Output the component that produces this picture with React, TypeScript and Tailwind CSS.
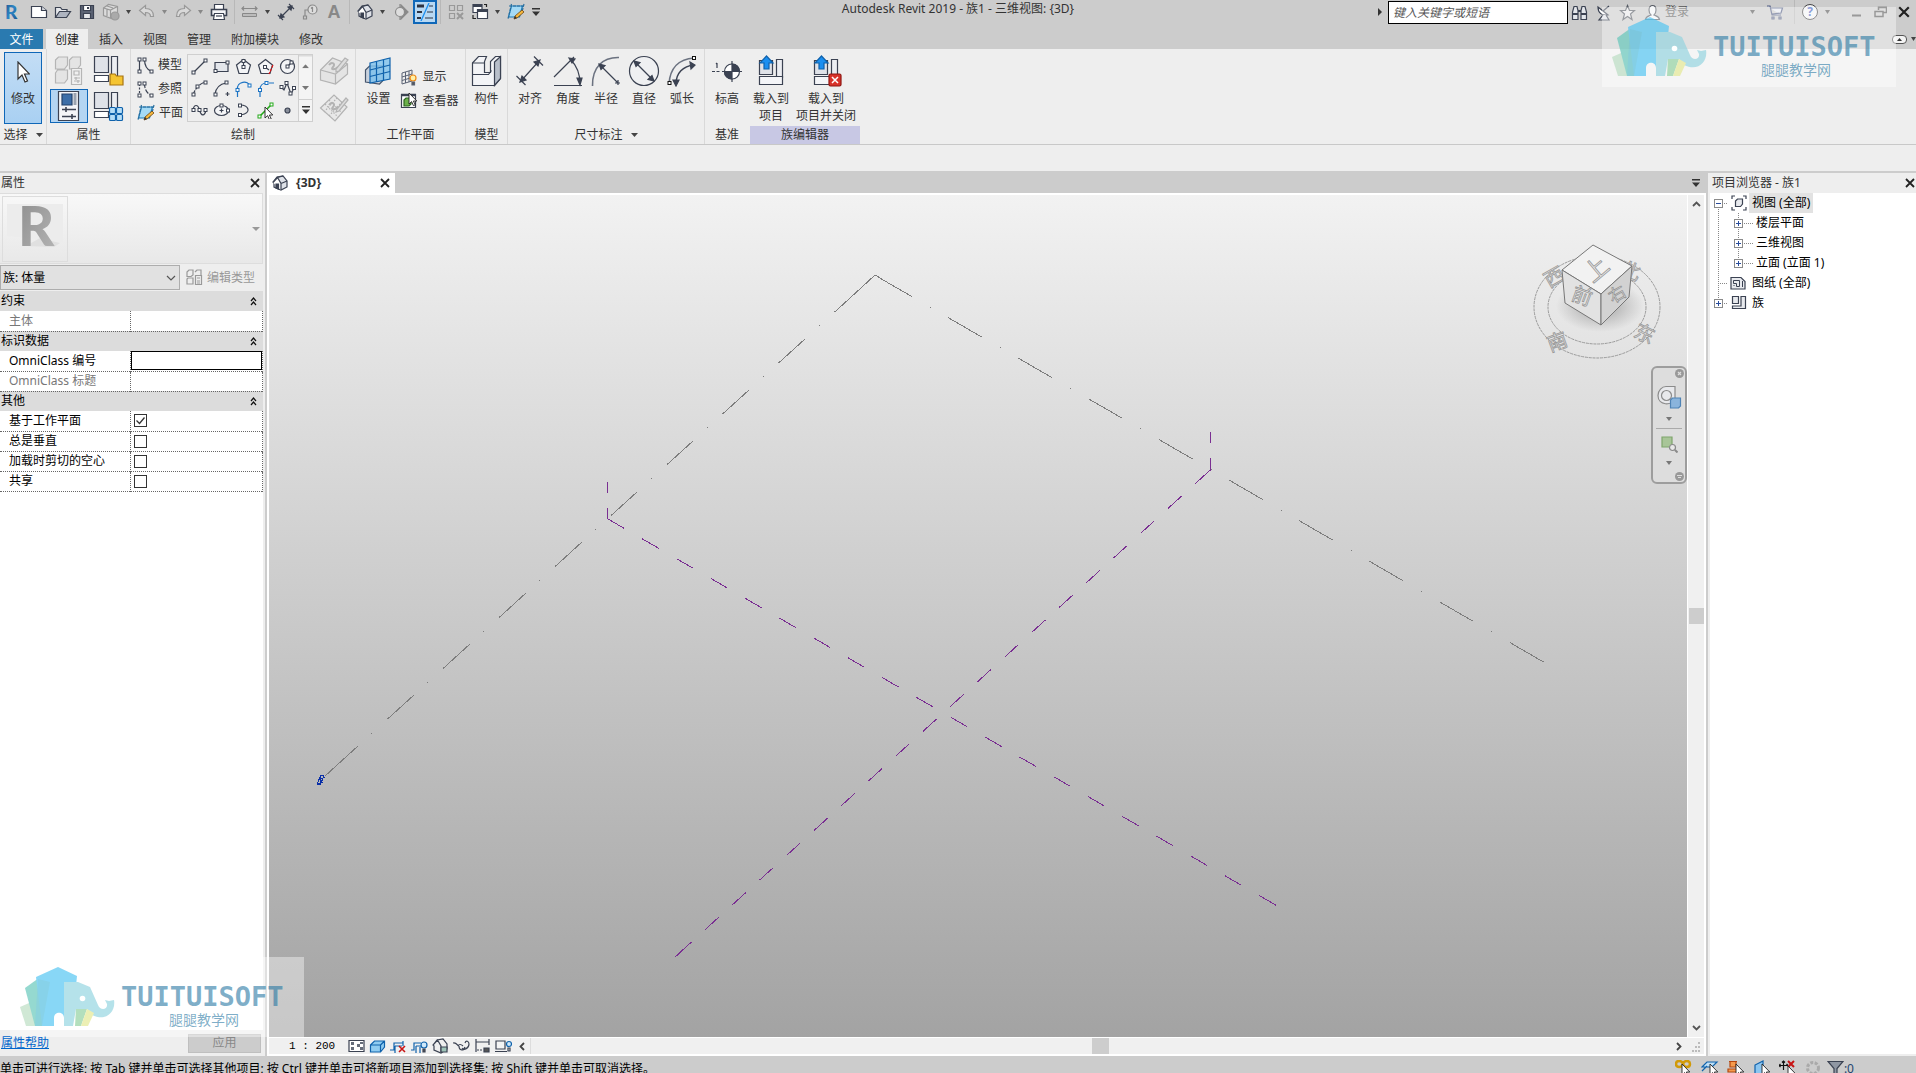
import type { ReactNode } from "react";
import clsx from "clsx";

const INK = "#3b4252";
const BLUE = "#0f62ac";

type SvgProps = { w: number; h: number; children: ReactNode; stroke?: string; className?: string };

function Svg({ w, h, children, stroke = INK, className }: SvgProps) {
  return (
    <svg
      width={w}
      height={h}
      viewBox={`0 0 ${w} ${h}`}
      fill="none"
      stroke={stroke}
      strokeWidth="1.2"
      className={clsx("shrink-0", className)}
      aria-hidden="true"
    >
      {children}
    </svg>
  );
}

/* ---------- shared drawings ---------- */

const Caret = ({ color = "#444", w = 7 }: { color?: string; w?: number }) => (
  <Svg w={w} h={4} stroke="none">
    <path d={`M0 0h${w}L${w / 2} 4z`} fill={color} />
  </Svg>
);

const MenuCaret = () => (
  <Svg w={8} h={8} stroke="none">
    <path d="M0 0h8v1.500H0zM0 3.500h8L4 8z" fill="#333" />
  </Svg>
);

const CloseIcon = ({ size = 10 }: { size?: number }) => (
  <svg width={size} height={size} viewBox="0 0 10 10" stroke="#222" strokeWidth="1.8" aria-hidden="true">
    <path d="M1 1l8 8M9 1L1 9" />
  </svg>
);

const Cursor = ({ x, y }: { x: number; y: number }) => (
  <path d={`M${x} ${y}v11l2.600-2.400 1.800 4 1.800-.8-1.800-3.800h3.400z`} fill="#fff" stroke="#222" strokeWidth=".9" />
);

const Node = ({ x, y, color = INK }: { x: number; y: number; color?: string }) => (
  <rect x={x - 1.5} y={y - 1.5} width="3" height="3" fill="#fff" stroke={color} strokeWidth="1" />
);

const HouseIcon = () => (
  <Svg w={16} h={16}>
    <path d="M1 7l4-5 6-1 4 5v6l-6 3-7-3V8z" fill="#dfe2e8" />
    <path d="M1 7.500l4.500-5L9 8.500V15M9 8.500l6-2.500M5.500 2.500L11 1" fill="#fff" />
    <path d="M4 9h2.500v5L4 13z" fill={INK} />
  </Svg>
);

const PlaneIcon = () => (
  <Svg w={18} h={18}>
    <path d="M4.500 3h11l-3 11h-11z" fill="#a5daf5" stroke="#1c7ab8" />
    <path d="M2 3h14M4.500 1L1 16M17 1l-2 8" stroke="#2a6f9e" strokeDasharray="3 1" />
    <path d="M7 16l1-3 7-6 2 2-7 6z" fill="#f6b73c" stroke="#6b4412" strokeWidth=".8" />
    <path d="M7 16l1-3 2 2z" fill="#333" stroke="none" />
  </Svg>
);

/* ---------- quick access icons ---------- */

const Logo = () => (
  <svg width="20" height="24" viewBox="0 0 20 24" className="overflow-visible" aria-hidden="true">
    <defs>
      <linearGradient id="logo" x1="0" y1="0" x2="1" y2="1">
        <stop offset="0" stopColor="#1c4f86" />
        <stop offset=".5" stopColor="#2f86c6" />
        <stop offset="1" stopColor="#174a80" />
      </linearGradient>
    </defs>
    <text x="3" y="19" fontSize="19" fontWeight="900" fontFamily="Lato, sans-serif" fill="url(#logo)">R</text>
  </svg>
);

const NewIcon = () => (
  <Svg w={18} h={16}>
    <path d="M1.500 2.500h10l5 4v7h-15z" fill="#fff" />
    <path d="M11.500 2.500v4h5" fill="#d5d8de" />
  </Svg>
);

const OpenIcon = () => (
  <Svg w={18} h={16}>
    <path d="M1.500 13V3.500h5l1.500 2h5v2" fill="#e6e8ec" />
    <path d="M1.500 13.500l4-6h11l-4 6z" fill="#aeb4c0" />
  </Svg>
);

const SaveIcon = () => (
  <Svg w={16} h={16}>
    <path d="M1.500 1.500h13v13h-13z" fill="#5b6374" />
    <path d="M4.500 1.500h7v5h-7z" fill="#fff" />
    <path d="M4.500 9.500h7v5h-7z" fill="#e6e8ec" />
    <path d="M9 3v2" strokeWidth="2" />
  </Svg>
);

const SyncIcon = () => (
  <Svg w={18} h={18} stroke="#999">
    <path d="M1.500 5l5-3.500 9 2v8l-6 4-8-3z" fill="#dcdcdc" />
    <path d="M1.500 5l7 2 7-3.500M8.500 7v8M5 6v7M5 3l6 2" />
    <circle cx="13" cy="13" r="4" fill="#aaa" />
  </Svg>
);

const UndoIcon = ({ flip = false }: { flip?: boolean }) => (
  <Svg w={18} h={16} stroke="#999">
    <path
      d={flip ? "M16.500 6.500l-6-5v3c-5 0-8 2-8 8h3c0-3 2-4 5-4v3z" : "M1.500 6.500l6-5v3c5 0 8 2 8 8h-3c0-3-2-4-5-4v3z"}
      fill="#d9d9d9"
    />
  </Svg>
);

const PrintIcon = () => (
  <Svg w={18} h={18}>
    <path d="M4.500 7V1.500h9V7" fill="#fff" />
    <path d="M1.500 6.500h15v6h-15z" fill="#f4f5f7" strokeWidth="1.600" />
    <path d="M4.500 10.500h9l1 6h-11z" fill="#fff" />
    <path d="M6 13h6" />
  </Svg>
);

const MeasureIcon = () => (
  <Svg w={18} h={14} stroke="#888">
    <path d="M1 3.500h15M3 1.500l-2 2 2 2M14 1.500l2 2-2 2" />
    <path d="M1.500 8.500h14v3h-14z" fill="#bbb" strokeWidth="1" />
  </Svg>
);

const DimIcon = () => (
  <Svg w={18} h={18}>
    <path d="M3 15L15 3M1 12l5 5M12 1l5 5" />
    <path d="M3 15l1-4 3 3zM15 3l-4 1 3 3z" fill={INK} />
  </Svg>
);

const TagIcon = () => (
  <Svg w={16} h={16} stroke="#8a8a8a">
    <circle cx="10.500" cy="5.500" r="4.500" fill="#ddd" />
    <path d="M10.500 3v5M9 4.500L10.500 3M6 6H3v6M1.500 12h3v3h-3z" />
  </Svg>
);

const SectionIcon = () => (
  <Svg w={16} h={16} stroke="#8a8a8a">
    <path d="M8 1l7 7-7 7z" fill="#8a8a8a" />
    <circle cx="7" cy="8" r="4.500" fill="#ddd" />
    <path d="M7 0v3M7 13v3" />
  </Svg>
);

const ThinLinesIcon = () => (
  <Svg w={18} h={18} stroke="#2d3342">
    <path d="M1 3h7" strokeWidth="3" />
    <path d="M1 9h5" strokeWidth="2" />
    <path d="M1 15h4" strokeWidth="2" />
    <path d="M13 3h4M11 9h6M9 15h8" strokeWidth="1" />
    <path d="M13 0L5 18" stroke="#1b8ff0" strokeWidth="1.300" />
  </Svg>
);

const CloseHiddenIcon = () => (
  <Svg w={16} h={16} stroke="#999">
    <path d="M1.500 1.500h5v5h-5zM9.500 1.500h5v5h-5zM1.500 9.500h5v5h-5z" />
    <path d="M9 9l6 6M15 9l-6 6" strokeWidth="2" />
  </Svg>
);

const SwitchIcon = () => (
  <Svg w={18} h={18}>
    <path d="M2 1.500h9v8H2z" fill="#fff" />
    <path d="M6.500 6.500h10v9h-10z" fill="#fff" />
    <path d="M2 3h9M6.500 8h10" strokeWidth="2" />
    <path d="M13 1.500h2.500V4M5 15.500H2V12" stroke="#222" />
  </Svg>
);

/* ---------- ribbon icons ---------- */

const TypePropsIcon = () => (
  <Svg w={30} h={30} stroke="#b5b5b5">
    <path d="M1.500 4l3-3h9v8l-3 4h-9zM15.500 4l3-3h8v8l-3 4h-8zM1.500 17l2-3h10v9l-3 4h-9z" fill="#e4e4e4" />
    <path d="M17.500 12.500h10v16h-10z" fill="#f0f0f0" />
    <path d="M20 15h5v4h-5zM20 22h6M20 25h6M22 21v3M24 24v3" />
  </Svg>
);

const PropsIcon = () => (
  <Svg w={24} h={32}>
    <path d="M1.500 1.500h20v29h-20z" fill="#f4f5f8" />
    <path d="M5 4h10v11H5z" fill="#3c6ea8" stroke="#23436c" />
    <path d="M18 3v12" stroke="#9aa3b0" strokeWidth="3" />
    <path d="M5 19.500h14M9 17v5M5 26.500h14M15 24v5" strokeWidth="1.600" />
  </Svg>
);

const FamilyIcon = ({ kind }: { kind: "folder" | "types" }) => (
  <Svg w={31} h={31}>
    <path d="M1.500 1.500h14v16h-14z" fill="#dfe2e8" />
    <path d="M18.500 1.500h6v20h-6z" fill="#eceef2" />
    <path d="M1.500 20.500h14v6h-14z" fill="#fff" />
    {kind === "folder" ? (
      <path d="M17 19h5l1.500 2H30v9H17z" fill="#f5c431" stroke="#a87412" />
    ) : (
      <g fill="#b5ddf7" stroke={BLUE}>
        <rect x="16.500" y="16.500" width="6" height="6" rx="1" />
        <rect x="23.500" y="16.500" width="6" height="6" rx="1" />
        <rect x="16.500" y="23.500" width="6" height="6" rx="1" />
        <rect x="23.500" y="23.500" width="6" height="6" rx="1" />
      </g>
    )}
  </Svg>
);

const ModelLineIcon = ({ dashed = false }: { dashed?: boolean }) => (
  <Svg w={17} h={17}>
    <path d="M2.500 3v11" strokeDasharray={dashed ? "2 1.5" : undefined} />
    <path d="M7.500 2c0 7 3 11 7 12.500" strokeDasharray={dashed ? "5 1.5" : undefined} />
    <Node x={2.5} y={2.5} />
    <Node x={2.5} y={14.5} />
    <Node x={7.5} y={2.5} />
    <Node x={14.5} y={14.5} />
  </Svg>
);

const drawTools: { name: string; icon: ReactNode }[] = [
  { name: "线", icon: <><path d="M2 15L15 2" /><Node x={2.5} y={14.5} /><Node x={14.5} y={2.5} /></> },
  { name: "矩形", icon: <><path d="M2 4.500h13v9H2z" fill="#e3e6eb" /><Node x={2.5} y={13} /><Node x={14.5} y={4.5} /></> },
  { name: "内接多边形", icon: <><path d="M8.500 1.500l7 5.500-2.500 8.500H4L1.500 7z" fill="#f4f5f7" /><path d="M8.500 2v6" /><Node x={8.5} y={9} /><Node x={8.5} y={3} /></> },
  { name: "外接多边形", icon: <><path d="M8.500 1.500l7 5.500-2.500 8.500H4L1.500 7z" fill="#f4f5f7" /><path d="M8 9l4 3" /><path d="M16 7l-4 9" stroke="#e01818" strokeDasharray="3 1" /><Node x={8} y={9} /></> },
  { name: "圆形", icon: <><circle cx="8.500" cy="8.500" r="7" fill="#f4f5f7" /><path d="M8.500 8.500l4-4" /><Node x={8.5} y={8.5} /><Node x={12.5} y={4.5} /></> },
  { name: "起点-终点-半径弧", icon: <><path d="M2 15C4 9 8 4 14 2" strokeDasharray="5 1" /><Node x={2.5} y={14.5} /><Node x={6.5} y={6.5} /><Node x={14.5} y={2.5} /></> },
  { name: "圆心-端点弧", icon: <><path d="M2 14C3 8 7 4 13 3" /><path d="M12.500 14h4M14.500 12v4" /><Node x={2.5} y={14.5} /><Node x={13.5} y={2.5} /></> },
  { name: "相切-端点弧", icon: <g stroke="#1d74c4"><path d="M2.500 10C1 1 14 0 14.500 6M2.500 12v5" /><Node x={2.5} y={10} color="#1d74c4" /><Node x={14.5} y={5.5} color="#1d74c4" /></g> },
  { name: "圆角弧", icon: <g stroke="#1d74c4"><path d="M3 10c0-5 2-7 7-7M3 12v5M12 3h5" /><Node x={3} y={10} color="#1d74c4" /><Node x={9.5} y={3} color="#1d74c4" /></g> },
  { name: "样条曲线", icon: <><path d="M2 7l3 3 3-7 4 11 3-6" /><Node x={2.5} y={7} /><Node x={7.5} y={3} /><Node x={11.5} y={13.5} /><Node x={15} y={8} /></> },
  { name: "通过点的样条曲线", icon: <><path d="M2 8c1-6 5-6 6.500 0s5 7 6.500 0" /><Node x={2.5} y={8} /><Node x={8.5} y={8} /><Node x={14.5} y={8} /></> },
  { name: "椭圆", icon: <><ellipse cx="8.500" cy="8.500" rx="7" ry="5" fill="#f4f5f7" /><path d="M8.500 6.500v4M6.500 8.500h4" /><Node x={8.5} y={3.5} /><Node x={15} y={8.5} /></> },
  { name: "半椭圆", icon: <><path d="M5 3c9 0 12 8 1 10" /><Node x={5} y={3.5} /><Node x={5} y={13} /></> },
  { name: "拾取线", icon: <><path d="M2 15L15 2" stroke="#23a818" strokeWidth="1.600" /><Node x={2.5} y={14.5} color="#23a818" /><Node x={14.5} y={2.5} color="#23a818" /><Cursor x={8} y={5} /></> },
  { name: "点图元", icon: <circle cx="8.500" cy="8.500" r="2.500" fill="#888e9a" /> },
];

const DrawOnFaceIcon = () => (
  <Svg w={30} h={30} stroke="#b3b3b3">
    <path d="M1.500 14l12-12 15 6v10l-12 10-15-4z" fill="#e4e4e4" />
    <path d="M1.500 14l15 4 12-10M16.500 18v10" />
    <path d="M10 9c3-4 7-1 4 2s2 3 5 0" strokeWidth="2" />
    <path d="M17 13l9-11 3 2-9 11-3 1z" fill="#ddd" />
  </Svg>
);

const DrawOnPlaneIcon = () => (
  <Svg w={30} h={30} stroke="#b3b3b3">
    <path d="M1.500 15L15 2l13 12-12 14z" fill="#e8e8e8" />
    <path d="M6 11l13 13M10 7l13 13M5 19L18 5M10 23L23 9" strokeDasharray="1.500 1.500" />
    <path d="M10 12c3-4 7-1 4 2s2 3 5 0" strokeWidth="2" />
    <path d="M18 16l9-11 2 2-9 11-3 1z" fill="#ddd" />
  </Svg>
);

const WorkPlaneIcon = () => (
  <Svg w={28} h={30} stroke={BLUE}>
    <path d="M1.500 14l4-4h14v14l-4 4-14-2z" fill="#c9d2dd" stroke="#46566d" />
    <path d="M6 7l20-5v21L6 27z" fill="#7cc0ec" fillOpacity=".8" />
    <path d="M12.500 5.500V26M19.500 4v20.500M6 14l20-5M6 20.500l20-5" />
  </Svg>
);

const ShowPlaneIcon = () => (
  <Svg w={18} h={18} stroke="#5b6374">
    <path d="M2 5l10-3v11L2 16zM5.500 4v11M9 3v11M2 9l10-3M2 12.500l10-3" strokeWidth="1" />
    <circle cx="13" cy="10" r="3" fill="#fff0a8" stroke="#ee8a16" />
    <path d="M12 14h2.500v3H12z" fill="#555" />
  </Svg>
);

const ViewerIcon = () => (
  <Svg w={18} h={18}>
    <path d="M1.500 2.500h14v13h-14z" fill="#fff" />
    <path d="M1 3h15" strokeWidth="2.500" />
    <path d="M4 8l2-2h5v6l-2 2H4z" fill="#6bb04b" stroke="#2d6620" />
    <Cursor x={9} y={1} />
  </Svg>
);

const ComponentIcon = () => (
  <Svg w={31} h={32}>
    <path d="M1.500 8l6-6.500h8l-2 5v11h6V6.500l5-5h5v22l-6 7h-22z" fill="#f3f4f7" />
    <path d="M23.500 7v23M23.500 7l6-5.500v22l-6 7z" fill="#b8bfca" />
    <path d="M1.500 8h12M1.500 19.500h16l3-4" />
  </Svg>
);

const AlignedIcon = () => (
  <Svg w={30} h={32}>
    <path d="M6 26L24 6M1.500 21l9 9M19 1.500l9 9" />
    <path d="M5 27l2-6 4 4zM25 5l-6 2 4 4z" fill={INK} />
  </Svg>
);

const AngularIcon = () => (
  <Svg w={30} h={32}>
    <path d="M1 30.500h28M1 22L21 2M18 5c6 6 9 14 9 24" />
    <path d="M16 3l6 1-3 4zM24 23h5l-2 7z" fill={INK} />
  </Svg>
);

const RadialIcon = () => (
  <Svg w={30} h={32}>
    <path d="M1.500 31C1 12 12 2 28 2.500" stroke="#6b7280" strokeWidth="1.600" />
    <path d="M9 10l18 18M24 28h5M27 25v5" />
    <path d="M8 9l6 1.500-4 4z" fill={INK} />
  </Svg>
);

const DiameterIcon = () => (
  <Svg w={32} h={32}>
    <circle cx="16" cy="16" r="14.500" fill="#eff0f2" />
    <path d="M7 7l18 18" />
    <path d="M6 6l6 1.500-4 4zM26 26l-6-1.500 4-4z" fill={INK} />
  </Svg>
);

const ArcLengthIcon = () => (
  <Svg w={30} h={32}>
    <path d="M2 29C3 13 12 4 27 3" stroke="#6b7280" strokeWidth="1.600" />
    <path d="M9 29c0-11 7-18 18-19" strokeWidth="1.500" />
    <path d="M6 25h6l-3 6zM23 7l5 3-4 4z" fill={INK} />
    <Node x={27} y={3} color="#111" />
    <Node x={2.5} y={28} color="#111" />
  </Svg>
);

const LevelIcon = () => (
  <Svg w={30} h={32}>
    <path d="M0 16.500h9" strokeDasharray="3 1.500" />
    <path d="M10 16.500h20M20 6v21M5 8v5M4 9l1-1" />
    <circle cx="20" cy="16.500" r="7.500" fill="#fff" />
    <path d="M20 9a7.500 7.500 0 0 1 7.500 7.500H20zM20 24a7.500 7.500 0 0 1-7.500-7.500H20z" fill="#3b4252" />
  </Svg>
);

const LoadIcon = ({ close = false }: { close?: boolean }) => (
  <Svg w={32} h={32}>
    <path d="M4.500 5.500h13v14h-13z" fill="#dfe2e8" />
    <path d="M21.500 4.500h6v18h-6z" fill="#eceef2" />
    <path d="M4.500 21.500h23v8h-23z" fill="#f4f5f8" />
    <path d="M11.500 1l6.500 7h-4v6H9V8H5z" fill="#1b8ff0" stroke={BLUE} />
    {close && (
      <>
        <rect x="19" y="19" width="12" height="12" rx="1.500" fill="#d8322a" stroke="#8f1712" />
        <path d="M22 22l6 6M28 22l-6 6" stroke="#fff" strokeWidth="1.500" />
      </>
    )}
  </Svg>
);

/* ---------- top bar ---------- */

function QatButton({ label, active, children }: { label: string; active?: boolean; children: ReactNode }) {
  return (
    <button
      title={label}
      className={clsx(
        "flex h-6 w-6 shrink-0 items-center justify-center",
        active && "border-2 border-[#0f67b8] bg-[#b7d8f3]",
      )}
    >
      {children}
    </button>
  );
}

const QatCaret = ({ color }: { color?: string }) => (
  <button title="更多" className="mr-0.5 flex h-6 w-2.5 shrink-0 items-center justify-center">
    <Caret color={color} w={5} />
  </button>
);

const QatDivider = () => <span className="mx-[3px] h-6 w-px shrink-0 bg-[#b8b8b8]" />;

function QuickAccess() {
  return (
    <div className="flex h-6 items-center">
      <button title="Revit" className="mr-1 flex h-6 w-[23px] items-center justify-center">
        <Logo />
      </button>
      <QatButton label="新建"><NewIcon /></QatButton>
      <QatButton label="打开"><OpenIcon /></QatButton>
      <QatButton label="保存"><SaveIcon /></QatButton>
      <QatButton label="同步"><SyncIcon /></QatButton>
      <QatCaret />
      <QatButton label="放弃"><UndoIcon /></QatButton>
      <QatCaret color="#888" />
      <QatButton label="重做"><UndoIcon flip /></QatButton>
      <QatCaret color="#888" />
      <QatButton label="打印"><PrintIcon /></QatButton>
      <QatDivider />
      <QatButton label="测量"><MeasureIcon /></QatButton>
      <QatCaret />
      <QatButton label="对齐尺寸标注"><DimIcon /></QatButton>
      <QatButton label="按类别标记"><TagIcon /></QatButton>
      <QatButton label="文字">
        <span className="font-['Liberation_Sans'] text-lg/6 font-bold text-[#888]">A</span>
      </QatButton>
      <QatDivider />
      <QatButton label="默认三维视图"><HouseIcon /></QatButton>
      <QatCaret />
      <QatButton label="剖面"><SectionIcon /></QatButton>
      <QatButton label="细线" active><ThinLinesIcon /></QatButton>
      <QatDivider />
      <QatButton label="关闭隐藏窗口"><CloseHiddenIcon /></QatButton>
      <QatButton label="切换窗口"><SwitchIcon /></QatButton>
      <QatCaret />
      <QatButton label="工作平面"><PlaneIcon /></QatButton>
      <button title="自定义快速访问工具栏" className="flex h-6 w-4 items-center justify-center">
        <MenuCaret />
      </button>
    </div>
  );
}

function InfoCenter() {
  return (
    <div className="flex h-6 items-center justify-end">
      <button title="展开" className="mr-1 flex h-6 w-2 items-center justify-center">
        <Svg w={4} h={8} stroke="none"><path d="M0 0l4 4-4 4z" fill="#333" /></Svg>
      </button>
      <input
        aria-label="搜索"
        placeholder="键入关键字或短语"
        className="h-[23px] w-[180px] border border-black bg-white px-1 text-xs italic outline-none placeholder:text-[#555]"
      />
      <QatButton label="搜索">
        <Svg w={17} h={17}>
          <path d="M3 2.500h3l1 4v9H1.500V8zM11 2.500h3L15.500 8v7.500H10v-9z" fill="#e3e6eb" />
          <path d="M7 7h3M2 10h5M10 10h5" strokeWidth="2" />
        </Svg>
      </QatButton>
      <QatButton label="通讯中心">
        <Svg w={16} h={17}>
          <path d="M2 3c0 6 4 9 10 8z" fill="#fff" />
          <path d="M7 7l6-5M7 11l-4 5h10l-3-5" fill="#dfe2e8" />
        </Svg>
      </QatButton>
      <QatButton label="收藏夹">
        <Svg w={17} h={17} stroke="#555a63"><path d="M8.500 1.500l2 5h5l-4 3.500 1.500 5.500-4.500-3-4.500 3L5.500 10l-4-3.500h5z" fill="#e8e8ea" /></Svg>
      </QatButton>
      <button className="mr-14 ml-1 flex h-6 items-center gap-1 text-xs text-[#555]">
        <Svg w={17} h={17} stroke="#555a63"><path d="M5 6c0-6 7-6 7 0 0 3-1 4-2 5 2 1 5 1 5.500 4.500h-14C2 12 5 12 7 11 6 10 5 9 5 6z" fill="#f4f5f7" /></Svg>
        登录
      </button>
      <span className="w-0.5" />
      <QatCaret color="#555" />
      <span className="w-1" />
      <QatButton label="Autodesk App Store">
        <Svg w={18} h={17} stroke="#4f5a80">
          <path d="M1 2h3l2 9h9M4.500 4h12l-1.500 5-9 1" fill="#e4e8f0" />
          <path d="M6 13h2v2H6zM13 13h2v2h-2z" />
        </Svg>
      </QatButton>
      <span className="w-1" />
      <QatDivider />
      <QatButton label="帮助">
        <span className="flex size-4 items-center justify-center rounded-full border border-[#444] bg-[#f2f3f6] text-xs font-bold text-[#3f5fc0]">?</span>
      </QatButton>
      <QatCaret color="#555" />
      <span className="w-2.5" />
      <QatButton label="最小化">
        <Svg w={9} h={10} stroke="#555"><path d="M0 8.500h9" strokeWidth="2" /></Svg>
      </QatButton>
      <QatButton label="还原">
        <Svg w={13} h={12} stroke="#555"><path d="M4.500 4V1.500h8v5H9M1 5.500h8v5H1z" strokeWidth="1.500" /></Svg>
      </QatButton>
      <QatButton label="关闭"><CloseIcon size={12} /></QatButton>
    </div>
  );
}

const tabs = ["插入", "视图", "管理", "附加模块", "修改"];

function RibbonTabs() {
  return (
    <nav className="flex h-5 items-stretch text-xs/[22px]">
      <button className="w-[43px] bg-[#2a7ab0] text-white">文件</button>
      <button className="ml-[3px] w-[42px] bg-[#eee] text-[#222]">创建</button>
      {tabs.map((tab) => (
        <button key={tab} className="ml-0.5 px-[9px] text-[#333]">{tab}</button>
      ))}
      <div className="ml-auto flex items-center gap-1">
        <button title="最小化功能区" className="flex h-[9px] w-[15px] items-center justify-center rounded-sm border border-[#555] bg-[#f4f4f4]">
          <Svg w={5} h={3} stroke="none"><path d="M0 3h5L2.500 0z" fill="#333" /></Svg>
        </button>
        <Caret w={5} />
      </div>
    </nav>
  );
}

/* ---------- ribbon ---------- */

function Panel({ title, caret, accent, last, className, children }: {
  title: string;
  caret?: boolean;
  accent?: boolean;
  last?: boolean;
  className?: string;
  children: ReactNode;
}) {
  return (
    <section className={clsx("flex flex-col", !last && "border-r border-[#d9d9d9]", className)}>
      <div className="flex h-[77px] justify-center pt-1">{children}</div>
      <h2 className={clsx("flex h-[18px] items-center justify-center gap-2 text-xs whitespace-nowrap", accent && "bg-[#c8c8e4]")}>
        {title}
        {caret && <Caret w={7} />}
      </h2>
    </section>
  );
}

function BigButton({ icon, label, className }: { icon: ReactNode; label: string; className?: string }) {
  return (
    <button className={clsx("flex flex-col items-center gap-0.5 pt-px text-xs/[17px] whitespace-pre-line", className)}>
      <span className="flex h-[34px] items-center">{icon}</span>
      <span>{label}</span>
    </button>
  );
}

function SmallButton({ icon, label }: { icon: ReactNode; label: string }) {
  return (
    <button className="flex h-6 items-center gap-1 text-xs whitespace-nowrap">
      {icon}
      {label}
    </button>
  );
}

function Ribbon() {
  return (
    <div className="flex h-24 items-stretch border-b border-[#c8c8c8] bg-[#eee] text-[#333]">
      <Panel title="选择" caret className="w-[47px]">
        <button className="-mt-px flex h-[72px] w-[38px] flex-col items-center gap-2 border border-[#0f67b8] bg-gradient-to-b from-[#c3ddf5] to-[#a9d0f2] pt-2 text-xs">
          <Svg w={14} h={22}>
            <path d="M2 1v17l4-4 3 7 2.500-1-3-7h5z" fill="#fff" stroke="#333" />
          </Svg>
          修改
        </button>
      </Panel>
      <Panel title="属性" className="w-[84px]">
        <div className="grid grid-cols-[38px_38px] grid-rows-[35px_34px] gap-x-0.5 gap-y-px">
          <button title="类型属性" className="flex items-center justify-center"><TypePropsIcon /></button>
          <button title="族类别和族参数" className="flex items-center justify-center"><FamilyIcon kind="folder" /></button>
          <button title="属性" className="flex items-center justify-center border border-[#0f67b8] bg-[#b4d5f2]"><PropsIcon /></button>
          <button title="族类型" className="flex items-center justify-center"><FamilyIcon kind="types" /></button>
        </div>
      </Panel>
      <Panel title="绘制" className="w-[225px]">
        <div className="flex flex-col">
          <SmallButton icon={<ModelLineIcon />} label="模型" />
          <SmallButton icon={<ModelLineIcon dashed />} label="参照" />
          <SmallButton icon={<PlaneIcon />} label="平面" />
        </div>
        <div className="mt-px ml-1 flex h-[68px] border border-[#cfcfcf]">
          <div className="grid grid-cols-[repeat(5,22px)] grid-rows-3">
            {drawTools.map((tool) => (
              <button key={tool.name} title={tool.name} className="flex items-center justify-center">
                <Svg w={17} h={17}>{tool.icon}</Svg>
              </button>
            ))}
          </div>
          <div className="flex w-3.5 flex-col divide-y divide-[#cfcfcf] border-l border-[#cfcfcf] bg-[#f4f4f4]">
            <button title="上移" className="flex flex-1 rotate-180 items-center justify-center"><Caret color="#777" /></button>
            <button title="下移" className="flex flex-1 items-center justify-center"><Caret color="#777" /></button>
            <button title="更多" className="flex flex-1 items-center justify-center"><MenuCaret /></button>
          </div>
        </div>
        <div className="ml-1.5 flex flex-col justify-around">
          <button title="在面上绘制"><DrawOnFaceIcon /></button>
          <button title="在工作平面上绘制"><DrawOnPlaneIcon /></button>
        </div>
      </Panel>
      <Panel title="工作平面" className="w-[110px]">
        <BigButton icon={<WorkPlaneIcon />} label="设置" className="w-8" />
        <div className="mt-3 ml-1.5 flex flex-col">
          <SmallButton icon={<ShowPlaneIcon />} label="显示" />
          <SmallButton icon={<ViewerIcon />} label="查看器" />
        </div>
      </Panel>
      <Panel title="模型" className="w-[42px]">
        <BigButton icon={<ComponentIcon />} label="构件" />
      </Panel>
      <Panel title="尺寸标注" caret className="w-[197px]">
        <div className="grid grid-cols-[repeat(5,38px)]">
          <BigButton icon={<AlignedIcon />} label="对齐" />
          <BigButton icon={<AngularIcon />} label="角度" />
          <BigButton icon={<RadialIcon />} label="半径" />
          <BigButton icon={<DiameterIcon />} label="直径" />
          <BigButton icon={<ArcLengthIcon />} label="弧长" />
        </div>
      </Panel>
      <Panel title="基准" last className="w-11">
        <BigButton icon={<LevelIcon />} label="标高" />
      </Panel>
      <Panel title="族编辑器" accent last className="ml-px w-[110px]">
        <BigButton icon={<LoadIcon />} label={"载入到\n项目"} className="w-[42px]" />
        <BigButton icon={<LoadIcon close />} label={"载入到\n项目并关闭"} className="w-[68px]" />
      </Panel>
    </div>
  );
}

/* ---------- properties palette ---------- */

type Row = { label: string; muted?: boolean; kind: "none" | "text" | "check"; checked?: boolean };

const groups: { title: string; rows: Row[] }[] = [
  { title: "约束", rows: [{ label: "主体", muted: true, kind: "none" }] },
  {
    title: "标识数据",
    rows: [
      { label: "OmniClass 编号", kind: "text" },
      { label: "OmniClass 标题", muted: true, kind: "none" },
    ],
  },
  {
    title: "其他",
    rows: [
      { label: "基于工作平面", kind: "check", checked: true },
      { label: "总是垂直", kind: "check" },
      { label: "加载时剪切的空心", kind: "check" },
      { label: "共享", kind: "check" },
    ],
  },
];

function ValueCell({ row }: { row: Row }) {
  if (row.kind === "text") {
    return <input id={row.label} className="block h-[19px] w-full border border-black bg-white px-1 outline-none" />;
  }
  if (row.kind === "check") {
    return (
      <span className="ml-[3px] grid size-[13px]">
        <input
          id={row.label}
          type="checkbox"
          defaultChecked={row.checked}
          className="peer col-start-1 row-start-1 size-[13px] appearance-none border border-[#333] bg-white"
        />
        <svg viewBox="0 0 13 13" fill="none" stroke="#333" strokeWidth="1.3" className="pointer-events-none invisible col-start-1 row-start-1 peer-checked:visible">
          <path d="M2.500 6.500l3 3 5-6" />
        </svg>
      </span>
    );
  }
  return null;
}

function PropertyTable() {
  return (
    <table className="w-full table-fixed border-collapse text-xs/4 text-black">
      <colgroup>
        <col className="w-[130px]" />
        <col />
      </colgroup>
      {groups.map((group) => (
        <tbody key={group.title}>
          <tr className="h-5 bg-[#dcdcdc]">
            <th colSpan={2} className="p-0 text-left font-normal">
              <button className="flex h-[19px] w-full items-center justify-between pr-1.5 pl-px">
                {group.title}
                <Svg w={7} h={9} stroke="#111"><path d="M1 4l2.500-3L6 4M1 8l2.500-3L6 8" /></Svg>
              </button>
            </th>
          </tr>
          {group.rows.map((row) => (
            <tr key={row.label} className="h-5 border-b border-dotted border-[#666]">
              <td className={clsx("border-r border-dotted border-[#666] p-0 pl-[9px]", row.muted && "text-[#777]")}>
                {row.kind === "none" ? row.label : <label htmlFor={row.label}>{row.label}</label>}
              </td>
              <td className="border-r border-dotted border-[#666] p-0"><ValueCell row={row} /></td>
            </tr>
          ))}
        </tbody>
      ))}
    </table>
  );
}

function PropertiesPalette() {
  return (
    <aside className="flex w-[265px] shrink-0 flex-col bg-[#eee] pr-0.5">
      <header className="flex h-5 items-center justify-between pr-0.5 pl-px text-xs text-[#333]">
        属性
        <button title="关闭" className="p-px"><CloseIcon /></button>
      </header>
      <div className="flex h-[71px] items-center justify-between border border-l-0 border-[#ddd] bg-gradient-to-b from-[#f8f8f8] to-[#e8e8e8] px-0.5">
        <div className="flex size-[66px] items-center justify-center border border-[#ddd]">
          <svg width="58" height="58" viewBox="0 0 58 58" className="overflow-visible" aria-hidden="true">
            <defs>
              <linearGradient id="thumb" x1="0" y1="0" x2="1" y2="1">
                <stop offset="0" stopColor="#8c8c8c" />
                <stop offset="1" stopColor="#b5b5b5" />
              </linearGradient>
            </defs>
            <path d="M1 4h56v38L1 36z" fill="#ececec" />
            <path d="M20 46l14-8 20 5-6 4z" fill="#e0e0e0" />
            <text x="12" y="46" fontSize="56" fontWeight="900" fontFamily="Lato, sans-serif" fill="url(#thumb)">R</text>
          </svg>
        </div>
        <Caret color="#999" w={8} />
      </div>
      <div className="flex h-[27px] items-center gap-1.5">
        <div className="grid h-[25px] w-[180px] items-center">
          <select aria-label="族类型过滤器" className="col-start-1 row-start-1 h-[25px] w-full appearance-none border border-[#adadad] bg-[#e1e1e1] pl-0.5 text-xs text-black">
            <option>族: 体量</option>
          </select>
          <Svg w={10} h={6} stroke="#555" className="pointer-events-none col-start-1 row-start-1 mr-1 justify-self-end">
            <path d="M1 1l4 4 4-4" />
          </Svg>
        </div>
        <button className="flex items-center gap-1 text-xs whitespace-nowrap text-[#999]">
          <Svg w={17} h={17} stroke="#999">
            <path d="M1 3l2-2h4v5L5 7.500H1zM9 3l2-2h4v5M1 10l1-1h5v6H1z" />
            <path d="M9.500 6.500h6v9h-6zM11 9h3M11 12h3M11 14h3" />
          </Svg>
          编辑类型
        </button>
      </div>
      <div className="flex-1 bg-white">
        <PropertyTable />
      </div>
      <footer className="flex h-[26px] items-center justify-between pr-0.5 pl-px text-xs">
        <a href="#help" className="text-[#0066cc] underline">属性帮助</a>
        <button disabled className="h-[19px] w-[73px] border border-[#bfbfbf] bg-[#ccc] leading-none text-[#888]">应用</button>
      </footer>
    </aside>
  );
}

/* ---------- drawing area ---------- */

function ReferencePlanes() {
  return (
    <svg className="absolute inset-0 size-full" aria-hidden="true">
      {/* drawn in window coordinates, the view's corner is at 269,195 */}
      <g transform="translate(-269 -195)" fill="none" shapeRendering="crispEdges">
        <g stroke="#7d7d7d">
          <path d="M861 288L875 275l4 2.300M333 769l-8 7" />
          <path d="M861 288L325 776" strokeDasharray="35.700 20 1.500 18.400" />
          <path d="M878 277L1547 664" strokeDasharray="39 20.500 1.500 20.100" />
        </g>
        <g stroke="#7a2f92">
          <path d="M607.500 482v11M607.500 508v11M1210.500 432v11M1210.500 458v12l-2 1.500M679 954l-4 3" />
          <path d="M608 519L1279 907" strokeDasharray="19 20.600" />
          <path d="M1208.600 471.500L675 957" strokeDasharray="18.200 18.600" />
        </g>
        <path d="M317 784l4-9 3 1-4 9zM318 780l7-3M320 775v9M323 782l-5 2" stroke="#0a2fa8" />
      </g>
    </svg>
  );
}

function ViewCube() {
  return (
    <svg className="absolute top-[45px] right-5 h-32 w-36" viewBox="1523 240 144 128" fill="none" stroke="#9a9a9a" aria-hidden="true">
      <defs>
        <radialGradient id="shade">
          <stop offset="0" stopColor="#888" stopOpacity=".8" />
          <stop offset="1" stopColor="#999" stopOpacity="0" />
        </radialGradient>
      </defs>
      <ellipse cx="1597" cy="307" rx="63" ry="51" strokeDasharray="3 .8" />
      <ellipse cx="1597" cy="307" rx="49" ry="37" strokeDasharray="3 .8" />
      <ellipse cx="1600" cy="306" rx="44" ry="26" fill="url(#shade)" stroke="none" />
      <g fontFamily="'Noto Sans CJK SC', sans-serif" fontSize="20" fill="#dedede" stroke="#999" strokeWidth=".8" textAnchor="middle">
        <text x="1555" y="284" transform="rotate(-30 1555 278)">西</text>
        <text x="1630" y="278" transform="rotate(20 1630 272)">北</text>
        <text x="1557" y="349" transform="rotate(-20 1557 341)">南</text>
        <text x="1645" y="341" transform="rotate(25 1645 333)">东</text>
      </g>
      <g stroke="#777">
        <path d="M1593 245l39 21-31 28-39-24z" fill="#f2f2f2" />
        <path d="M1562 270l39 24v31l-36-22z" fill="#e2e2e2" />
        <path d="M1632 266l-31 28v31l28-28z" fill="#d2d2d2" />
      </g>
      <g fontFamily="'Noto Sans CJK SC', sans-serif" fontSize="20" fill="#e4e4e4" stroke="#8f8f8f" strokeWidth=".7" textAnchor="middle">
        <text x="1596" y="278" transform="rotate(-40 1596 269)" fontSize="24">上</text>
        <text x="1582" y="303" transform="rotate(20 1582 296)">前</text>
        <text x="1617" y="300" fontSize="17" transform="rotate(-30 1617 294)">右</text>
      </g>
    </svg>
  );
}

function NavBar() {
  return (
    <div className="absolute top-[171px] right-0 flex h-[118px] w-9 flex-col items-center justify-between rounded-md border-2 border-[#9d9d9d] bg-[#ddd] p-px">
      <button title="关闭" className="self-end">
        <Svg w={9} h={9} stroke="#ddd"><circle cx="4.500" cy="4.500" r="4.500" fill="#999" stroke="none" /><path d="M3 3l3 3M6 3L3 6" /></Svg>
      </button>
      <button title="控制盘">
        <Svg w={26} h={24} stroke="#8b8b8b">
          <path d="M10 1.500h9v12c-3 8-17 7-17-3 0-5 4-9 8-9z" fill="#e8e9ec" />
          <circle cx="10.500" cy="10.500" r="5" />
          <path d="M14.500 15l2-2h8v8l-2 2h-8z" fill="#8ab4dc" stroke="#4f83b5" />
        </Svg>
      </button>
      <Caret color="#777" w={6} />
      <span className="h-px w-[26px] bg-[#aaa]" />
      <button title="区域放大">
        <Svg w={17} h={17} stroke="#8a8a8a">
          <path d="M1 1h10v10H1z" fill="#a8c598" stroke="#7fa56c" />
          <circle cx="11.500" cy="11.500" r="3" fill="#e8e8e8" />
          <path d="M14 14l2.500 2.500" strokeWidth="2" />
        </Svg>
      </button>
      <Caret color="#777" w={6} />
      <button title="自定义" className="self-end">
        <Svg w={9} h={9} stroke="#ddd"><circle cx="4.500" cy="4.500" r="4.500" fill="#999" stroke="none" /><path d="M2 3.500h5M3 5.500h3" /></Svg>
      </button>
    </div>
  );
}

const viewTools: { name: string; icon: ReactNode }[] = [
  { name: "详细程度", icon: <><path d="M1 2.500h15v11H1z" fill="#fff" /><path d="M3 4h3v3H3zM9 6h3v3H9zM12 4h3v2h-3zM3 9h3v3H3zM12 9h3v3h-3z" fill="#666d7a" stroke="none" /></> },
  { name: "视觉样式", icon: <path d="M1.500 7l4-4h10v6l-4 5h-10zM1.500 7h10v7M11.500 7l4-4" fill="#8fccf1" stroke={BLUE} /> },
  { name: "裁剪视图", icon: <><path d="M0 12h4V5h9M13 3v5M5 8h7M5 8v7" stroke={BLUE} /><path d="M9 8l6 6M15 8l-6 6" stroke="#c81414" strokeWidth="1.600" /></> },
  { name: "显示裁剪区域", icon: <><path d="M0 12h3V5h7M5 8h5M5 8v7M9 9v6" stroke={BLUE} /><circle cx="13" cy="7" r="3" fill="#cfe8fa" stroke={BLUE} /><path d="M12 11h2v3h-2z" fill="#555" /></> },
  { name: "锁定三维视图", icon: <><path d="M1 7l4-5 6-1 4 5v5l-6 4-7-3V8zM1 7l4.500-5L9 8v6" fill="#eee" /><path d="M9 9h6v5H9z" fill="#9fc4b8" /></> },
  { name: "临时隐藏", icon: <path d="M0 5c4-1 4 3 6 3M6 8c0 5 5 5 6 1M9 10c2 3 7 0 7-4 0-3-3-4-4-1M5 8c1-2 3-2 5 0" /> },
  { name: "临时视图属性", icon: <><path d="M2 1v13M15 1v6M2 4h13" /><path d="M3 12h5" strokeDasharray="2 1" /><path d="M10 10h5v4h-5z" fill="#555" /></> },
  { name: "约束", icon: <><path d="M1 3h9v8H1zM0 13.500h12" fill="#f4f4f4" /><circle cx="14" cy="6" r="2.500" fill="#cfe8fa" stroke={BLUE} /><path d="M13 10h2v3h-2z" /></> },
];

function ViewControls() {
  return (
    <div className="flex h-4 items-center">
      <span className="ml-5 w-[57px] font-['Liberation_Mono'] text-[11px] whitespace-pre text-black">1 : 200</span>
      {viewTools.map((tool) => (
        <button key={tool.name} title={tool.name} className="flex h-4 w-[21px] shrink-0 items-center justify-center">
          <Svg w={17} h={16}>{tool.icon}</Svg>
        </button>
      ))}
      <button title="向左" className="flex h-4 w-4 items-center justify-center">
        <Svg w={6} h={9} stroke="#444"><path d="M5 1L1.500 4.500 5 8" strokeWidth="1.800" /></Svg>
      </button>
      <div className="flex h-full flex-1 justify-center border-l border-[#ddd]">
        <span className="h-full w-[17px] bg-[#cdcdcd]" />
      </div>
      <button title="向右" className="flex h-4 w-[17px] items-center justify-center">
        <Svg w={6} h={9} stroke="#444"><path d="M1 1l3.500 3.500L1 8" strokeWidth="1.800" /></Svg>
      </button>
    </div>
  );
}

function DrawingArea() {
  return (
    <main className="flex min-w-0 flex-1 flex-col">
      <div className="flex h-5 items-stretch justify-between">
        <div className="flex w-32 items-center bg-white pr-1 pl-[5px] text-xs">
          <HouseIcon />
          <button className="ml-2 flex-1 text-left font-bold text-[#333]">{"{3D}"}</button>
          <button title="关闭" className="p-px"><CloseIcon /></button>
        </div>
        <button title="窗口列表" className="mr-[5px] px-px"><MenuCaret /></button>
      </div>
      <div className="flex flex-1 flex-col border-2 border-white bg-[#f0f0f0]">
        <div className="flex flex-1">
          <div className="relative flex-1 overflow-hidden bg-gradient-to-b from-[#f2f2f2] to-[#a3a3a3]">
            <ReferencePlanes />
            <ViewCube />
            <NavBar />
          </div>
          <div className="flex w-[17px] flex-col items-center justify-between border-l border-white py-0.5">
            <button title="向上" className="flex h-3.5 w-4 items-center justify-center">
              <Svg w={9} h={6} stroke="#555"><path d="M1 5l3.500-3.500L8 5" strokeWidth="1.800" /></Svg>
            </button>
            <span className="h-4 w-[15px] bg-[#cdcdcd]" />
            <button title="向下" className="flex h-3.5 w-4 items-center justify-center">
              <Svg w={9} h={6} stroke="#555"><path d="M1 1l3.500 3.500L8 1" strokeWidth="1.800" /></Svg>
            </button>
          </div>
        </div>
        <div className="flex border-t border-white">
          <div className="min-w-0 flex-1"><ViewControls /></div>
          <Svg w={17} h={16} stroke="none">
            <path d="M11 4h2v2h-2zM8 8h2v2H8zM11 8h2v2h-2zM5 12h2v2H5zM8 12h2v2H8zM11 12h2v2h-2z" fill="#bbb" />
          </Svg>
        </div>
      </div>
    </main>
  );
}

/* ---------- project browser ---------- */

const ViewsIcon = () => (
  <Svg w={16} h={16}>
    <path d="M1 4V1h3M12 1h3v3M15 12v3h-3M4 15H1v-3" />
    <path d="M4.500 6l2-2h5v5l-2 2.500h-5z" fill="#e8eaee" />
  </Svg>
);

const SheetsIcon = () => (
  <Svg w={17} h={14}>
    <path d="M1 1.500h10l4 4V13H1z" fill="#e8eaee" />
    <path d="M3.500 4.500h6v6h-3v-3h-3zM3.500 9.500h1M12.500 5v6" strokeWidth="1" />
  </Svg>
);

const FamiliesIcon = () => (
  <Svg w={16} h={16}>
    <path d="M1.500 1.500h6v7h-6zM10 1.500h4.500v12h-13V11H10z" fill="#e8eaee" />
  </Svg>
);

type TreeRow = {
  label: string;
  root?: "minus" | "plus" | "branch" | "line";
  child?: "mid" | "last";
  icon?: ReactNode;
  selected?: boolean;
};

const tree: TreeRow[] = [
  { label: "视图 (全部)", root: "minus", icon: <ViewsIcon />, selected: true },
  { label: "楼层平面", root: "line", child: "mid" },
  { label: "三维视图", root: "line", child: "mid" },
  { label: "立面 (立面 1)", root: "line", child: "last" },
  { label: "图纸 (全部)", root: "branch", icon: <SheetsIcon /> },
  { label: "族", root: "plus", icon: <FamiliesIcon /> },
];

const rootLines = {
  minus: "M10.500 10v10M10 10.500h10",
  line: "M10.500 0v20",
  branch: "M10.500 0v20M10 10.500h10",
  plus: "M10.500 0v10M10 10.500h10",
};

function Expander({ plus }: { plus: boolean }) {
  return (
    <>
      <rect x="6.500" y="6.500" width="8" height="8" fill="#fff" stroke="#8a8a8a" strokeWidth="1" />
      <path d={plus ? "M8 10.500h5M10.500 8v5" : "M8 10.500h5"} stroke="#2a4d9c" strokeWidth="1" />
    </>
  );
}

function ProjectBrowser() {
  return (
    <aside className="ml-0.5 flex w-52 shrink-0 flex-col bg-[#eee]">
      <header className="flex h-5 items-center justify-between pl-1 text-xs text-[#333]">
        项目浏览器 - 族1
        <button title="关闭" className="p-px"><CloseIcon /></button>
      </header>
      <ul className="mb-0.5 ml-0.5 flex-1 bg-white text-xs text-black">
        {tree.map((row) => (
          <li key={row.label} className="flex h-5 items-center">
            <Svg w={18} h={20}>
              <g transform="translate(-2 0)">
                <path d={rootLines[row.root ?? "line"]} stroke="#888" strokeWidth="1" strokeDasharray="1 1" />
                {(row.root === "minus" || row.root === "plus") && <Expander plus={row.root === "plus"} />}
              </g>
            </Svg>
            {row.child ? (
              <Svg w={26} h={20}>
                <path d={row.child === "last" ? "M10.500 0v10M10 10.500h15" : "M10.500 0v20M10 10.500h15"} stroke="#888" strokeWidth="1" strokeDasharray="1 1" />
                <Expander plus />
              </Svg>
            ) : (
              <span className="flex w-[21px] justify-center">{row.icon}</span>
            )}
            <button className={clsx("h-5", row.selected && "bg-[#e2e2e2]", row.child ? "px-0.5" : "px-[3px]")}>{row.label}</button>
          </li>
        ))}
      </ul>
    </aside>
  );
}

/* ---------- status bar ---------- */

const statusTools: { name: string; icon: ReactNode }[] = [
  { name: "选择链接", icon: <><path d="M1 4c0-4 6-4 7 0s7 4 7 0-6-4-7 0-7 4-7 0z" stroke="#d19a08" strokeWidth="2.500" /><Cursor x={7} y={4} /></> },
  { name: "选择基线图元", icon: <><path d="M1 7l5-5h10l-5 5zM1 11l5-5" fill="#bfe0f7" stroke={BLUE} /><Cursor x={9} y={4} /></> },
  { name: "选择锁定图元", icon: <><path d="M2 1.500h8M3 2v5h6V2M1 9h10v3H1z" fill="#f59a4c" stroke="#b5460f" /><Cursor x={9} y={4} /></> },
  { name: "按面选择图元", icon: <><path d="M2 14V5l8-4v13z" fill="#8cc6f0" stroke={BLUE} /><Cursor x={9} y={4} /></> },
  { name: "选择时拖曳图元", icon: <><path d="M0 5.500h9M4.500 1v9M3 2.500L4.500 1 6 2.500M1.500 4L0 5.500 1.500 7M7.500 4L9 5.500" stroke="#111" /><path d="M9 1l6 6M15 1L9 7" stroke="#c81414" strokeWidth="2" /><Cursor x={9} y={6} /></> },
  { name: "后台进程", icon: <circle cx="8" cy="8" r="5.500" stroke="#aaa" strokeWidth="3" strokeDasharray="3 1.500" /> },
];

function StatusBar() {
  return (
    <footer className="flex h-[17px] shrink-0 items-start justify-between overflow-hidden bg-[#ccc] pt-1 text-xs/[18px] text-black">
      <p className="whitespace-nowrap">
        单击可进行选择; 按 Tab 键并单击可选择其他项目; 按 Ctrl 键并单击可将新项目添加到选择集; 按 Shift 键并单击可取消选择。
      </p>
      <div className="mr-[62px] flex items-start">
        {statusTools.map((tool) => (
          <button key={tool.name} title={tool.name} className="flex w-[26px] justify-center">
            <Svg w={18} h={16}>{tool.icon}</Svg>
          </button>
        ))}
        <button title="过滤器" className="flex">
          <Svg w={17} h={16}><path d="M1 1.500h15l-6 7v7H7v-7z" fill="#9097a3" /></Svg>
          <span className="text-[#24456f]">:0</span>
        </button>
      </div>
    </footer>
  );
}

/* ---------- watermark ---------- */

function Watermark({ className }: { className: string }) {
  return (
    <div className={clsx("pointer-events-none absolute h-20 w-[294px] bg-white/40", className)}>
      <svg width="294" height="80" viewBox="0 0 294 80" aria-hidden="true">
        <g opacity=".65">
          <path d="M10 50l16-7 10 26H16z" fill="#b7dcc0" />
          <path d="M15 31l12.500-9L40 25l-4 44H25z" fill="#5dc5b8" />
          <path d="M26 20l22-10 19 9-5 50h-8v-8c0-7-10-7-10 0v8H32z" fill="#4ac3f2" />
          <path d="M40 25l-8 44h-7l3-47z" fill="#48b6d0" opacity=".6" />
          <path
            d="M54 25l14 0 12 5 8 18c2 6 10 5 9-1l-2-4 4 1 5-1c2 12-8 22-22 15l-5-6-11 0-3 17h-9z"
            fill="#8fd3df"
          />
          <path d="M66 52h11l-6 17h-6z" fill="#8ccf9b" />
          <path d="M77 52l7 4-6 13h-7z" fill="#e3e88d" />
        </g>
        <circle cx="72.500" cy="41.500" r="2.800" fill="#fff" />
        <text x="111" y="49" fontFamily="'DejaVu Sans Mono', monospace" fontWeight="700" fontSize="27" fill="#2878a3" fillOpacity=".6">
          TUITUISOFT
        </text>
        <text x="159" y="68" fontFamily="'Noto Sans CJK SC', sans-serif" fontSize="14" fill="#2878a3" fillOpacity=".6">
          腿腿教学网
        </text>
      </svg>
    </div>
  );
}

export default function App() {
  return (
    <div className="relative flex h-screen flex-col overflow-hidden bg-[#ccc] font-['Noto_Sans','Noto_Sans_CJK_SC',sans-serif] select-none">
      <div className="grid h-[29px] shrink-0 grid-cols-[1fr_auto_1fr] items-start">
        <QuickAccess />
        <h1 className="text-xs/[18px] whitespace-nowrap text-[#333]">Autodesk Revit 2019 - 族1 - 三维视图: {"{3D}"}</h1>
        <InfoCenter />
      </div>
      <RibbonTabs />
      <Ribbon />
      <div className="h-[26px] shrink-0 bg-[#eee]" />
      <div className="mt-0.5 flex min-h-0 flex-1">
        <PropertiesPalette />
        <span className="w-0.5 shrink-0" />
        <DrawingArea />
        <ProjectBrowser />
      </div>
      <StatusBar />
      <Watermark className="top-[7px] right-5" />
      <Watermark className="bottom-9 left-2.5" />
    </div>
  );
}
